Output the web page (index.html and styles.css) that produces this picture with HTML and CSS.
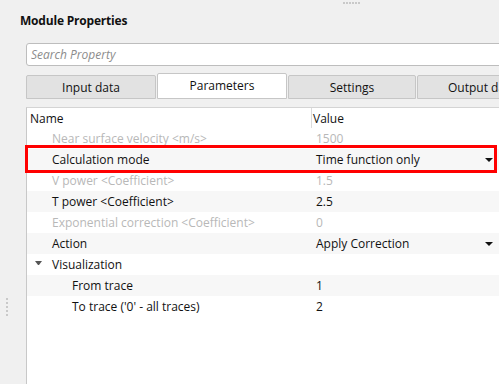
FILE: index.html
```html
<!DOCTYPE html>
<html lang="en">
<head>
    <meta charset="UTF-8">
    <title>Module Properties</title>
    <link rel="stylesheet" href="styles.css">
</head>
<body>

    <div class="gutter">
        <div class="grip-v"><i></i><i></i><i></i><i></i><i></i></div>
    </div>

    <div class="panel">
        <div class="grip-h"><i></i><i></i><i></i><i></i><i></i><i></i></div>
        <div class="panel-title">Module Properties</div>

        <div class="panel-body">
            <input type="text" class="search" placeholder="Search Property">

            <div class="tabs">
                <div class="tab">Input data</div>
                <div class="tab active">Parameters</div>
                <div class="tab tab-narrow">Settings</div>
                <div class="tab">Output data</div>
            </div>

            <div class="prop-grid">
                <div class="prop-head">
                    <div class="col-name">Name</div>
                    <div class="col-value">Value</div>
                </div>

                <div class="prop-row disabled">
                    <div class="col-name lvl1">Near surface velocity &lt;m/s&gt;</div>
                    <div class="col-value">1500</div>
                </div>
                <div class="prop-row alt marked">
                    <div class="col-name lvl1">Calculation mode</div>
                    <div class="col-value">Time function only <span class="caret"></span></div>
                </div>
                <div class="prop-row disabled">
                    <div class="col-name lvl1">V power &lt;Coefficient&gt;</div>
                    <div class="col-value">1.5</div>
                </div>
                <div class="prop-row alt">
                    <div class="col-name lvl1">T power &lt;Coefficient&gt;</div>
                    <div class="col-value">2.5</div>
                </div>
                <div class="prop-row disabled">
                    <div class="col-name lvl1">Exponential correction &lt;Coefficient&gt;</div>
                    <div class="col-value">0</div>
                </div>
                <div class="prop-row alt">
                    <div class="col-name lvl1">Action</div>
                    <div class="col-value">Apply Correction <span class="caret"></span></div>
                </div>
                <div class="prop-row">
                    <div class="col-name lvl1"><span class="expander"></span>Visualization</div>
                    <div class="col-value"></div>
                </div>
                <div class="prop-row alt">
                    <div class="col-name lvl2">From trace</div>
                    <div class="col-value">1</div>
                </div>
                <div class="prop-row">
                    <div class="col-name lvl2">To trace ('0' - all traces)</div>
                    <div class="col-value">2</div>
                </div>
            </div>
        </div>
    </div>

</body>
</html>
```

FILE: styles.css
```css
:root { --bg: #f0f0f0; --border: #c8c8c8; --text: #111; --muted: #b8b8b8; --alt: #f7f7f7; }
*, *::before, *::after { box-sizing: border-box; font-family: 'Open Sans', 'Noto Sans', sans-serif; }

body { margin: 0; background: var(--bg); color: var(--text); height: 100vh; overflow: hidden; display: flex; font-size: 12px; }

/* SPLITTERS */
.gutter { width: 20px; flex-shrink: 0; }
.grip-v { display: flex; flex-direction: column; gap: 2px; align-items: center; padding-top: 298px; padding-right: 6px; }
.grip-v i, .grip-h i { width: 2px; height: 2px; background: #c9c9c9; display: block; }
.grip-h { display: flex; gap: 1px; height: 6px; padding: 2px 0 0 323px; }

/* PANEL */
.panel { flex-shrink: 0; width: 600px; display: flex; flex-direction: column; }
.panel-title { font-weight: 700; font-size: 12px; line-height: 16px; margin-top: 7px; letter-spacing: -0.2px; }
.panel-body { margin-left: 6px; flex: 1; display: flex; flex-direction: column; }

.search { margin-top: 14px; height: 23px; width: 100%; border: 1px solid #bdbdbd; border-radius: 3px; background: white; padding: 0 4px; font-size: 12px; outline: none; }
.search::placeholder { color: #8c8c8c; font-style: italic; }

/* TABS */
.tabs { display: flex; align-items: flex-end; gap: 1px; margin-top: 7px; height: 26px; }
.tab { width: 130px; height: 24px; background: #e2e2e2; border: 1px solid #c6c6c6; border-radius: 2px 2px 0 0; display: flex; align-items: center; justify-content: center; padding-top: 1px; }
.tab.active { height: 26px; background: white; padding-top: 0; padding-bottom: 1px; }
.tab-narrow { width: 128px; }

/* GRID */
.prop-grid { margin-top: 8px; flex: 1; background: white; border-top: 1px solid #d4d4d4; border-left: 1px solid var(--border); }
.prop-head, .prop-row { display: flex; height: 21px; align-items: center; }
.prop-head { height: 20px; }
.col-name { width: 284px; flex-shrink: 0; padding-left: 3px; white-space: nowrap; overflow: hidden; }
.col-value { flex: 1; padding-left: 5px; display: flex; align-items: center; height: 100%; }
.prop-head .col-value { border-left: 1px solid #dcdcdc; padding-left: 1px; }

.prop-row.alt { background: var(--alt); }
.prop-row.disabled { color: var(--muted); }
.lvl1 { padding-left: 25px; position: relative; }
.lvl2 { padding-left: 45px; }

.caret { margin-left: auto; margin-right: 127px; width: 8px; height: 4px; border-left: 4px solid transparent; border-right: 4px solid transparent; border-top: 4px solid #111; }
.expander { position: absolute; left: 8px; top: 5px; width: 7px; height: 4px; border-left: 3.5px solid transparent; border-right: 3.5px solid transparent; border-top: 4px solid #555; }

/* ANNOTATION */
.marked { position: relative; }
.marked::after { content: ''; position: absolute; left: -2px; top: -4px; width: 472px; height: 28px; border: 3px solid #f00; }
```
